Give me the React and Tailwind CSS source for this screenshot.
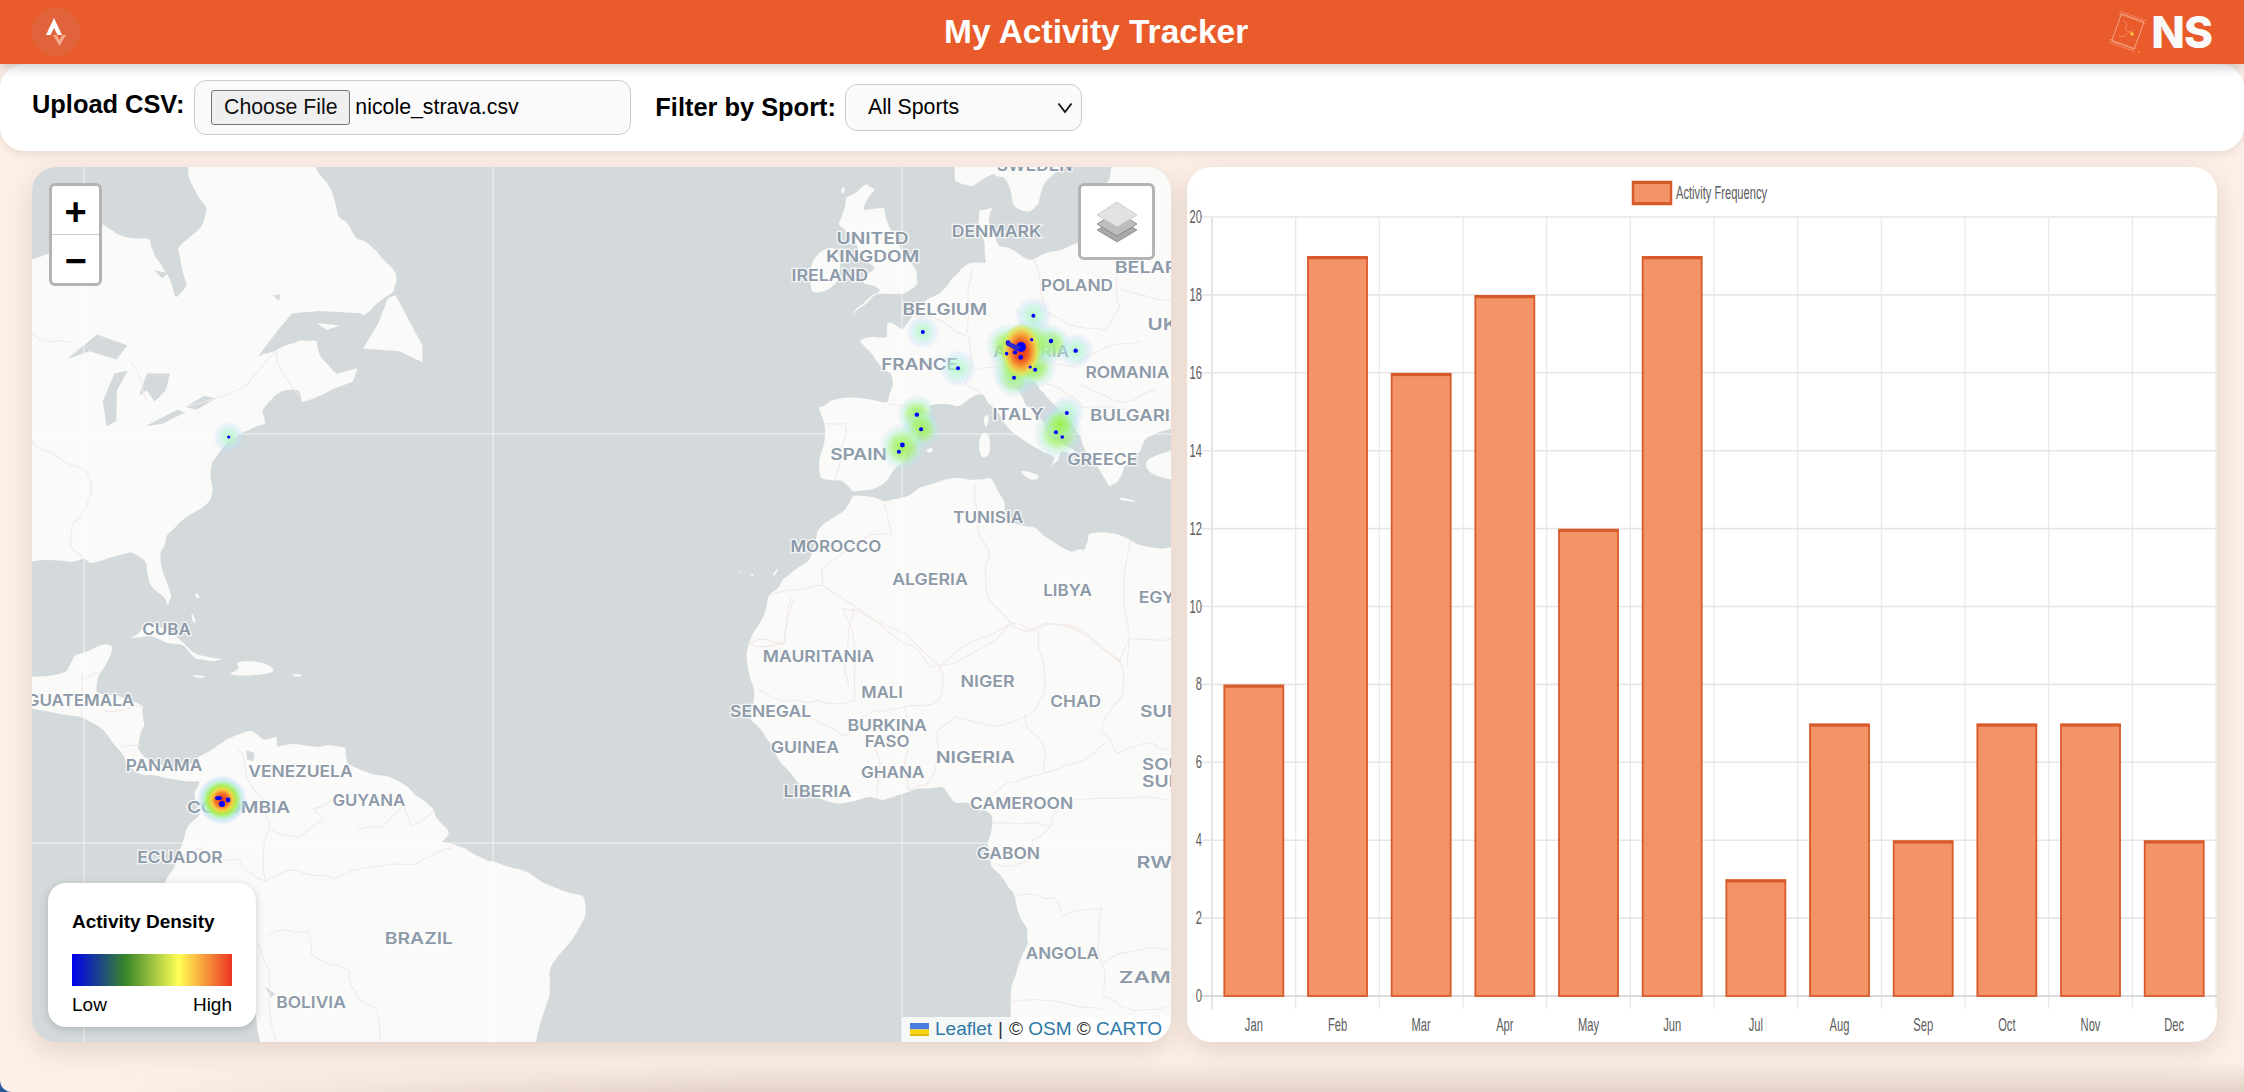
// App.jsx - activity tracker dashboard
import React from "react";

// the map drawing is traced in three different crops, these bring them to map pixels
const a = ([x, y]) => [x / 2.613, y / 1.792];
const b = ([x, y]) => [588 + x / 2.84, y / 3];
const c = ([x, y]) => [528 + x / 2.529, 433 + y / 3];
const line = (pts, f, close) =>
  "M" + pts.map((p) => f(p).map((n) => n.toFixed(1)).join(" ")).join("L") + (close ? "Z" : "");

// roughens a traced outline a little so coasts don't look like plain polygons
const wiggle = (pts) => {
  let out = pts;
  for (let round = 0; round < 2; round++) {
    const next = [];
    out.forEach((p, i) => {
      const q = out[(i + 1) % out.length];
      const dx = q[0] - p[0];
      const dy = q[1] - p[1];
      const n = Math.sin(p[0] * 12.9898 + p[1] * 78.233) * 43758.5453;
      const k = ((n - Math.floor(n)) - 0.5) * 0.22;
      next.push(p, [(p[0] + q[0]) / 2 - dy * k, (p[1] + q[1]) / 2 + dx * k]);
    });
    out = next;
  }
  return out;
};
const coast = (pts, f) => {
  const local = pts.map(f);
  const rough = local.length > 7 ? wiggle(local) : local;
  const mid = (p, q) => `${((p[0] + q[0]) / 2).toFixed(1)} ${((p[1] + q[1]) / 2).toFixed(1)}`;
  const last = rough[rough.length - 1];
  return (
    `M${mid(last, rough[0])}` +
    rough.map((p, i) => `Q${p[0].toFixed(1)} ${p[1].toFixed(1)} ${mid(p, rough[(i + 1) % rough.length])}`).join("") +
    "Z"
  );
};

const landA = [
  [[-60, 170], [180, 100], [240, 125], [310, 130], [320, 160], [345, 185], [375, 235], [405, 210], [380, 145], [440, 110], [455, 70], [410, 20], [420, -40], [720, -40], [760, 20], [800, 90], [850, 130], [900, 150], [950, 190], [945, 225], [880, 260], [860, 268], [750, 262], [680, 265], [640, 300], [600, 335], [645, 325], [700, 310], [745, 312], [760, 345], [800, 372], [850, 362], [835, 385], [790, 395], [705, 420], [698, 400], [660, 400], [600, 440], [610, 460], [550, 475], [515, 490], [490, 510], [470, 530], [470, 590], [420, 620], [350, 660], [335, 690], [365, 770], [355, 787], [310, 750], [300, 710], [260, 690], [155, 710], [135, 700], [60, 705], [-60, 720]],
  [[-60, 900], [90, 905], [110, 875], [190, 855], [210, 860], [180, 905], [170, 945], [290, 965], [295, 1000], [275, 1040], [345, 1075], [420, 1070], [470, 1045], [530, 1020], [575, 1010], [600, 1025], [640, 1020], [640, 1040], [750, 1040], [820, 1040], [825, 1070], [900, 1090], [1000, 1125], [1050, 1150], [1090, 1190], [1070, 1210], [1130, 1220], [1210, 1245], [1300, 1265], [1440, 1305], [1445, 1345], [1350, 1440], [1345, 1500], [1300, 1640], [606, 1640], [585, 1510], [480, 1400], [345, 1285], [375, 1250], [400, 1195], [440, 1160], [425, 1120], [440, 1100], [345, 1095], [300, 1090], [245, 1070], [235, 1050], [200, 1020], [130, 985], [-60, 955]],
  [[255, 845], [300, 820], [350, 830], [420, 870], [500, 880], [430, 882], [390, 855], [300, 840]],
  [[530, 885], [600, 885], [645, 905], [570, 912], [505, 910], [545, 900]],
  [[410, 910], [460, 912], [440, 917]],
  [[675, 908], [712, 910], [690, 915]],
  [[415, 795], [430, 815], [420, 818]],
  [[430, 760], [440, 775], [425, 770]],
];

const waterA = [
  [[90, 345], [170, 300], [250, 320], [220, 345], [150, 330]],
  [[185, 420], [215, 370], [250, 365], [222, 400], [220, 455], [195, 465]],
  [[280, 410], [300, 370], [360, 370], [350, 400], [320, 420], [300, 400]],
  [[295, 465], [380, 435], [400, 440], [340, 460]],
  [[400, 430], [450, 410], [480, 415], [430, 435]],
  [[560, 1045], [582, 1050], [578, 1065], [562, 1062]],
  [[608, 1468], [635, 1482], [625, 1488]],
  [[320, 185], [355, 190], [340, 200]],
  [[630, 230], [650, 228], [645, 240]],
  // gulf of St Lawrence, the smoothing closes it otherwise
  [[590, 340], [640, 295], [680, 262], [750, 258], [860, 262], [900, 300], [880, 345], [830, 352], [800, 368], [765, 345], [745, 310], [700, 308], [645, 322]],
];

// these lie in the gulf, so they go on top of the water
const overGulf = [
  [[930, 235], [950, 230], [1020, 320], [1020, 350], [960, 330], [865, 325], [905, 280]],
  [[700, 402], [790, 372], [850, 360], [838, 385], [790, 397], [705, 422]],
  [[745, 280], [805, 284], [770, 292]],
];

const landB = [
  [[640, 90], [700, 50], [725, 70], [690, 130], [750, 120], [755, 155], [790, 230], [845, 320], [845, 350], [800, 380], [720, 385], [660, 445], [700, 400], [740, 370], [690, 350], [725, 300], [680, 260], [655, 200], [620, 170]],
  [[545, 270], [610, 230], [630, 290], [615, 360], [545, 385], [540, 340]],
  [[680, 520], [760, 510], [760, 465], [800, 490], [830, 450], [900, 385], [960, 320], [990, 290], [1040, 290], [1030, 210], [1020, 130], [1060, 120], [1050, 180], [1080, 240], [1130, 260], [1170, 280], [1280, 235], [1350, 240], [1400, 200], [1300, 100], [1390, 40], [1400, -30], [1640, -30], [1640, 790], [1500, 810], [1480, 850], [1450, 880], [1420, 930], [1390, 960], [1340, 880], [1310, 820], [1290, 780], [1240, 720], [1190, 665], [1170, 640], [1120, 660], [1150, 715], [1205, 765], [1215, 800], [1285, 845], [1295, 862], [1255, 850], [1245, 880], [1215, 905], [1235, 870], [1195, 850], [1120, 800], [1060, 720], [1030, 680], [960, 720], [880, 715], [880, 740], [830, 830], [800, 890], [750, 950], [660, 975], [630, 940], [570, 935], [570, 860], [580, 770], [565, 720], [600, 700], [760, 710], [775, 650], [770, 620], [700, 545]],
  [[940, -30], [950, 40], [1000, 60], [1060, 20], [1090, 30], [1115, 110], [1160, 135], [1190, 110], [1210, 40], [1270, -30]],
  [[1640, 830], [1500, 870], [1490, 900], [1520, 930], [1640, 950]],
  [[1125, 905], [1200, 925], [1170, 945]],
  [[1020, 800], [1050, 795], [1052, 870], [1020, 872]],
  [[1030, 750], [1050, 740], [1040, 790]],
  [[865, 850], [890, 840], [885, 860]],
  [[1415, 990], [1480, 1005], [1420, 1000]],
  [[625, 70], [640, 55], [635, 85]],
  [[338, 1210], [345, 1215], [340, 1218]],
  [[370, 1222], [382, 1220], [375, 1230]],
  [[432, 1225], [452, 1198], [440, 1228]],
];

const africa = [
  ...[[640, 1030], [560, 1090], [540, 1180], [460, 1240], [420, 1290], [365, 1430], [380, 1560]].map(b),
  ...[[480, 360], [540, 440], [590, 530], [690, 610], [780, 590], [820, 600], [900, 565], [970, 560], [1000, 610], [1090, 640], [1080, 730], [1090, 800], [1150, 880], [1170, 965], [1185, 1030], [1140, 1160], [1135, 1400]].map(c),
  [1180, 920],
  ...[[1680, 1150], [1568, 1140], [1450, 1120], [1400, 1100], [1330, 1100], [1320, 1150], [1280, 1155], [1180, 1080], [1090, 1060], [1090, 1000], [1050, 930], [1000, 940], [850, 960], [750, 1005], [660, 985]].map(b),
];

const bordersA = [
  [[0, 300], [100, 315]],
  [[260, 350], [300, 420]],
  [[400, 430], [555, 395], [640, 330], [665, 380], [700, 410]],
  [[0, 490], [60, 515], [130, 540], [155, 565], [105, 640], [100, 680], [135, 700]],
  [[130, 905], [130, 985]],
  [[130, 920], [180, 905]],
  [[190, 975], [290, 965]],
  [[230, 1040], [285, 1035]],
  [[535, 1040], [560, 1090], [610, 1140], [620, 1185], [700, 1200], [760, 1170], [735, 1150], [790, 1130]],
  [[850, 1190], [910, 1185], [970, 1140], [990, 1180], [1050, 1150]],
  [[620, 1185], [610, 1280]],
  [[370, 1250], [440, 1220], [540, 1240], [610, 1280], [690, 1260], [790, 1275], [1000, 1250], [1100, 1220]],
  [[610, 1380], [720, 1370], [730, 1410], [830, 1440], [850, 1490], [900, 1510], [910, 1568]],
  [[640, 1568], [620, 1440], [590, 1390]],
];

const bordersB = [
  [[760, 710], [880, 745]],
  [[580, 770], [640, 770], [625, 850], [610, 935]],
  [[830, 450], [990, 510], [1000, 590], [980, 650], [1030, 680]],
  [[985, 500], [990, 350], [1000, 300]],
  [[1175, 280], [1195, 380], [1210, 430]],
  [[1120, 430], [1195, 430], [1270, 470], [1380, 490], [1420, 420], [1410, 350], [1420, 300]],
  [[1010, 610], [1110, 600], [1200, 590], [1290, 600], [1380, 540], [1480, 520]],
  [[1210, 650], [1290, 690], [1310, 720], [1330, 720], [1560, 760]],
  [[1300, 650], [1400, 700], [1520, 670]],
  [[1420, 365], [1568, 400]],
  [[420, 1290], [500, 1270], [575, 1255], [575, 1205], [700, 1110], [770, 1100], [750, 1010]],
  [[575, 1255], [880, 1470], [910, 1500], [1110, 1370], [1170, 1390], [1215, 1370], [1420, 1480], [1450, 1415], [1568, 1415]],
  [[365, 1430], [465, 1430], [490, 1290]],
  [[635, 1325], [665, 1325], [650, 1560]],
  [[1010, 950], [1015, 1060], [1050, 1160], [1050, 1300], [1110, 1370]],
  [[1450, 1120], [1440, 1500]],
];

const bordersC = [
  [[480, 130], [570, 130], [590, 0]],
  [[715, 25], [745, 300], [650, 300], [590, 300], [500, 270]],
  [[715, 25], [870, 130], [940, 200], [1140, 70], [1190, 95], [1235, 70], [1415, 185], [1420, 290], [1380, 350], [1370, 400], [1410, 460], [1500, 430], [1545, 450]],
  [[960, 200], [960, 300], [870, 320], [880, 380]],
  [[950, 400], [1000, 350], [1100, 380], [1175, 350], [1220, 430], [1225, 520], [1130, 550], [1060, 640]],
  [[1175, 350], [1225, 280], [1210, 95]],
  [[1225, 520], [1300, 490], [1380, 430]],
  [[870, 320], [800, 330], [720, 410], [600, 350]],
  [[800, 450], [800, 590]],
  [[880, 450], [880, 570], [930, 550], [950, 400]],
  [[1090, 670], [1240, 680], [1250, 640], [1300, 600], [1540, 600]],
  [[1100, 790], [1190, 780], [1195, 720], [1240, 680]],
  [[1150, 890], [1250, 895], [1270, 950], [1370, 925], [1370, 1090], [1545, 1050]],
  [[1370, 1090], [1370, 1190], [1420, 1220], [1545, 1215]],
  [[1140, 1205], [1370, 1225]],
];

// [text, left, right, middle], traced per crop
const labelsA = [
  ["CUBA", 288, 415, 828], ["GUATEMALA", -14, 267, 956], ["PANAMA", 245, 445, 1072],
  ["VENEZUELA", 565, 838, 1082], ["GUYANA", 785, 975, 1135], ["COLOMBIA", 405, 675, 1147],
  ["ECUADOR", 275, 498, 1236], ["BRAZIL", 922, 1100, 1381], ["BOLIVIA", 638, 820, 1496],
];
const labelsB = [
  ["SWEDEN", 1070, 1285, -5], ["UNITED", 615, 820, 212], ["KINGDOM", 585, 850, 267], ["IRELAND", 487, 705, 323],
  ["DENMARK", 942, 1197, 191], ["BELARUS", 1405, 1660, 300], ["POLAND", 1195, 1400, 355],
  ["BELGIUM", 802, 1043, 425], ["UKRAINE", 1498, 1760, 470], ["FRANCE", 742, 960, 592],
  ["AUSTRIA", 1060, 1275, 552], ["ROMANIA", 1322, 1560, 616], ["ITALY", 1058, 1203, 740],
  ["BULGARIA", 1335, 1600, 745], ["SPAIN", 597, 758, 862], ["GREECE", 1270, 1470, 875],
  ["TUNISIA", 946, 1145, 1049], ["MOROCCO", 484, 742, 1136], ["ALGERIA", 773, 988, 1236],
  ["LIBYA", 1202, 1340, 1269], ["EGYPT", 1473, 1640, 1290],
];
const labelsC = [
  ["MAURITANIA", 513, 795, 167], ["MALI", 762, 867, 277], ["NIGER", 1013, 1150, 242], ["CHAD", 1240, 1368, 302],
  ["SUDAN", 1467, 1640, 332], ["SENEGAL", 430, 635, 334], ["BURKINA", 727, 928, 376], ["FASO", 771, 884, 424],
  ["GUINEA", 533, 706, 440], ["NIGERIA", 950, 1150, 471], ["GHANA", 761, 922, 515], ["SOUTH", 1472, 1640, 493],
  ["SUDAN", 1472, 1645, 542], ["LIBERIA", 565, 737, 574], ["CAMEROON", 1037, 1298, 608], ["GABON", 1054, 1214, 758],
  ["RWANDA", 1458, 1700, 785], ["ANGOLA", 1178, 1363, 1060], ["ZAMBIA", 1413, 1640, 1132],
];

const seams = { x: [52, 461, 870], y: [267, 676] };

// heat spots in the europe crop: [x, y, radius, gradient]
const halos = [
  [860, 495, 17, "low"], [960, 604, 19, "low"], [1174, 446, 19, "low"], [1295, 551, 18, "low"],
  [1269, 738, 18, "low"], [843, 743, 20, "mid"], [855, 787, 20, "mid"], [802, 840, 24, "mid"],
  [1245, 800, 25, "mid"], [1250, 770, 18, "mid"], [1119, 632, 20, "mid"], [1130, 590, 28, "mid"],
  [1100, 535, 22, "mid"], [1179, 600, 22, "mid"], [1224, 530, 20, "mid"], [1170, 530, 26, "mid"],
];
const dots = [
  [1102, 527, 2.4], [1122, 556, 2.2], [1098, 560, 1.8], [1138, 571, 2.4], [1169, 518, 1.6], [1224, 522, 2.2],
  [1294, 551, 2.2], [1165, 600, 1.6], [1179, 608, 2], [1119, 632, 2], [1174, 446, 2], [860, 495, 2], [960, 604, 2],
  [843, 743, 2.2], [855, 787, 2], [802, 834, 2.4], [792, 854, 2], [1269, 738, 2], [1238, 796, 2], [1256, 810, 1.8],
];

const LandMap = () => (
  <svg viewBox="0 0 1139 875" className="block h-full w-full">
    <defs>
      <radialGradient id="low">
        <stop offset="0%" stopColor="#b4f5b4" stopOpacity="0.85" />
        <stop offset="45%" stopColor="#b6f5dc" stopOpacity="0.6" />
        <stop offset="75%" stopColor="#bcdcfa" stopOpacity="0.3" />
        <stop offset="100%" stopColor="#c4d0ff" stopOpacity="0" />
      </radialGradient>
      <radialGradient id="mid">
        <stop offset="0%" stopColor="#9af04c" stopOpacity="0.95" />
        <stop offset="45%" stopColor="#a8f27c" stopOpacity="0.72" />
        <stop offset="72%" stopColor="#b4f0d8" stopOpacity="0.42" />
        <stop offset="100%" stopColor="#c0d0ff" stopOpacity="0" />
      </radialGradient>
      <radialGradient id="high">
        <stop offset="0%" stopColor="#e8301c" />
        <stop offset="35%" stopColor="#ee5a20" />
        <stop offset="60%" stopColor="#f5a83a" />
        <stop offset="82%" stopColor="#e6e65a" stopOpacity="0.85" />
        <stop offset="100%" stopColor="#a8ec60" stopOpacity="0" />
      </radialGradient>
      <radialGradient id="city">
        <stop offset="0%" stopColor="#e8301c" />
        <stop offset="26%" stopColor="#f0702a" />
        <stop offset="42%" stopColor="#f6d040" />
        <stop offset="58%" stopColor="#a8ee5a" />
        <stop offset="74%" stopColor="#b0f0c8" stopOpacity="0.8" />
        <stop offset="88%" stopColor="#b4d8f8" stopOpacity="0.4" />
        <stop offset="100%" stopColor="#c0d0ff" stopOpacity="0" />
      </radialGradient>
    </defs>

    <rect width="1139" height="875" fill="#d4dadc" />
    <g fill="#fafaf8">
      {landA.map((p, i) => <path key={i} d={coast(p, a)} />)}
      {landB.map((p, i) => <path key={i} d={coast(p, b)} />)}
      <path d={coast(africa, (p) => p)} />
    </g>
    <g fill="#d4dadc">
      {waterA.map((p, i) => <path key={i} d={line(p, a, true)} />)}
    </g>
    <g fill="#fafaf8">
      {overGulf.map((p, i) => <path key={i} d={line(p, a, true)} />)}
    </g>
    <g fill="none" stroke="#f2e9e9" strokeWidth="1.1">
      {bordersA.map((p, i) => <path key={i} d={line(wiggle(p.map(a)).slice(0, -3), (q) => q)} />)}
      {bordersB.map((p, i) => <path key={i} d={line(wiggle(p.map(b)).slice(0, -3), (q) => q)} />)}
      {bordersC.map((p, i) => <path key={i} d={line(wiggle(p.map(c)).slice(0, -3), (q) => q)} />)}
    </g>
    <g stroke="#ffffff" strokeOpacity="0.7" strokeWidth="1">
      {seams.x.map((x) => <line key={x} x1={x} x2={x} y1="0" y2="875" />)}
      {seams.y.map((y) => <line key={y} x1="0" x2="1139" y1={y} y2={y} />)}
    </g>

    <g fontFamily="Inter, sans-serif" fontWeight="600" fontSize="16" fill="#8d9aa8" stroke="#ffffff" strokeOpacity="0.75" strokeWidth="2.5" style={{ paintOrder: "stroke" }}>
      {[[labelsA, a], [labelsB, b], [labelsC, c]].map(([list, f]) =>
        list.map(([t, l, r, m]) => {
          const [x1, y] = f([l, m]);
          const [x2] = f([r, m]);
          return (
            <text key={t + l} x={x1} y={y + 6} textLength={x2 - x1} lengthAdjust="spacingAndGlyphs">
              {t}
            </text>
          );
        })
      )}
    </g>

    {/* heat layer */}
    {(() => {
      const [ux, uy] = a([514, 484]);
      return <circle cx={ux} cy={uy} r="16" fill="url(#low)" />;
    })()}
    {halos.map(([x, y, r, g], i) => {
      const [cx, cy] = b([x, y]);
      return <circle key={i} cx={cx} cy={cy} r={r} fill={`url(#${g})`} />;
    })}
    <ellipse cx="989" cy="184" rx="20" ry="28" fill="url(#high)" />
    <circle cx="190" cy="633" r="25" fill="url(#city)" />
    <g fill="#0000ff">
      {dots.map(([x, y, r], i) => {
        const [cx, cy] = b([x, y]);
        return <circle key={i} cx={cx} cy={cy} r={r} />;
      })}
      <circle cx="989" cy="180" r="5" />
      <path d="M975 174 L989 180 L985 184 L974 178Z" fill="#2b2bd0" />
      <circle cx="196.7" cy="270" r="1.6" />
      <ellipse cx="186.5" cy="631" rx="3.5" ry="2" />
      <circle cx="190" cy="637" r="3" />
      <circle cx="196" cy="633" r="2.4" />
    </g>
  </svg>
);

const months = ["Jan", "Feb", "Mar", "Apr", "May", "Jun", "Jul", "Aug", "Sep", "Oct", "Nov", "Dec"];
const counts = [8, 19, 16, 18, 12, 19, 3, 7, 4, 7, 7, 4];
const X0 = 25;
const STEP = 83.67;
const Y0 = 829;
const UNIT = 38.95;

// chart text looks squeezed in the picture, so it is narrowed with scale
const ChartText = ({ x, y, anchor = "middle", children }) => (
  <text transform={`translate(${x} ${y}) scale(0.62 1)`} textAnchor={anchor} fontSize="18" fill="#5c5c5c" fontFamily="Liberation Sans, sans-serif">
    {children}
  </text>
);

const BarChart = () => (
  <svg viewBox="0 0 1030 875" className="block h-full w-full">
    <rect x="446" y="15" width="38" height="22" fill="#f29468" stroke="#d85a2a" strokeWidth="2.5" />
    <rect x="445" y="14" width="40" height="3" fill="#d85a2a" />
    <rect x="445" y="35" width="40" height="3" fill="#d85a2a" />
    <ChartText x="489" y="32" anchor="start">Activity Frequency</ChartText>

    {Array.from({ length: 13 }, (_, i) => (
      <line key={i} x1={X0 + i * STEP} x2={X0 + i * STEP} y1="50" y2="842" stroke={i === 0 ? "#d4d4d4" : "#e8e8e8"} strokeWidth="1.2" />
    ))}
    {Array.from({ length: 11 }, (_, i) => {
      const y = Y0 - i * 2 * UNIT;
      return (
        <g key={i}>
          <line x1="14" x2="1030" y1={y} y2={y} stroke={i === 0 ? "#d0d0d0" : "#e6e6e6"} strokeWidth="1.6" />
          <ChartText x="15" y={y + 6} anchor="end">{i * 2}</ChartText>
        </g>
      );
    })}

    {counts.map((n, i) => {
      const cx = X0 + (i + 0.5) * STEP;
      const top = Y0 - n * UNIT + 1;
      return (
        <g key={months[i]}>
          <rect x={cx - 29.5} y={top} width="59" height={Y0 - top} fill="#f29468" stroke="#d85a2a" strokeWidth="1.8" />
          <rect x={cx - 30} y={top - 0.5} width="60" height="2.8" fill="#d85a2a" />
          <ChartText x={cx} y="864">{months[i]}</ChartText>
        </g>
      );
    })}
  </svg>
);

const StravaLogo = () => (
  <div className="flex h-12 w-12 items-center justify-center rounded-full bg-[#e0633c]">
    <svg viewBox="0 0 48 48" className="h-12 w-12">
      <path d="M14 27 L22 10 L30 27 L25.500 27 L22 20 L18.500 27Z" fill="#ffffff" />
      <path d="M21 27 L24.500 27 L27.500 32 L30.500 27 L34 27 L27.500 38Z" fill="#f5ab8c" />
    </svg>
  </div>
);

const NsLogo = () => (
  <div className="flex items-center gap-[4px]">
    <svg viewBox="0 0 38 42" className="h-[42px] w-[38px]" fill="none">
      <g transform="rotate(20 19 20)" opacity="0.75">
        <rect x="7" y="6" width="24" height="29" stroke="#f8d8c8" strokeWidth="0.7" />
        <path d="M5 4 H33 M5 7 H33 M5 34 H33 M5 37 H33" stroke="#f8d8c8" strokeWidth="0.7" strokeDasharray="1.500 1" />
        <path d="M11 12 Q17 12 16 18 T25 17 M12 28 Q18 28 19 23 T26 22" stroke="#f3a27e" strokeWidth="0.7" />
      </g>
      <circle cx="23" cy="23" r="1.800" fill="#f9c83a" />
      <circle cx="30" cy="41" r="0.700" fill="#f9c83a" />
    </svg>
    <span className="font-['Inter',sans-serif] text-[44px] leading-none font-extrabold tracking-[-1px] text-[#fafafa]">NS</span>
  </div>
);

const LayersIcon = () => (
  <svg viewBox="0 0 42 42" className="h-[42px] w-[42px]">
    <path d="M21 15 L41 27 L21 39 L1 27Z" fill="#a8a8a8" stroke="#8a8a8a" strokeWidth="0.8" transform="translate(0 2)" />
    <path d="M21 9 L41 21 L21 33 L1 21Z" fill="#bdbdbd" stroke="#7d7d7d" strokeWidth="0.8" transform="translate(0 2)" />
    <path d="M21 0 L41 13 L21 25 L1 13Z" fill="#e2e2e2" stroke="#c4c4c4" strokeWidth="0.8" transform="translate(0 1)" />
  </svg>
);

const App = () => {
  return (
    <div className="h-screen w-full overflow-hidden bg-[#2a5a9a]">
      <div className="flex h-full flex-col overflow-hidden rounded-bl-[12px] bg-[#fdf0e8] font-['Liberation_Sans',Arial,sans-serif] text-black">
        {/* Header */}
        <header className="relative z-10 flex h-[64px] shrink-0 items-center justify-between bg-[#e95b2a] pr-[32px] pl-[32px] shadow-[0_4px_10px_rgba(0,0,0,0.18)]">
          <StravaLogo />
          <h1 className="ml-[3px] text-[33.5px] font-bold text-white">My Activity Tracker</h1>
          <NsLogo />
        </header>

        {/* Controls */}
        <div className="flex h-[87px] shrink-0 items-center rounded-3xl bg-white pl-[32px] shadow-[0_3px_8px_rgba(120,90,70,0.15)]">
          <label className="-mt-[6px] text-[25.4px] font-bold">Upload CSV:</label>
          <div className="ml-[10px] flex h-[55px] w-[437px] items-center rounded-xl border-[1.5px] border-[#cccccc] bg-[#fafafa] pl-[16px]">
            <button className="h-[35px] w-[139px] rounded-[3px] border border-[#767676] bg-[#efefef] text-[21.3px] text-[#111111]">
              Choose File
            </button>
            <span className="ml-[5px] text-[21.3px]">nicole_strava.csv</span>
          </div>
          <label className="ml-[24px] text-[25.4px] font-bold">Filter by Sport:</label>
          <div className="relative ml-[9px] h-[47px] w-[237px]">
            <select className="h-full w-full appearance-none rounded-xl border-[1.5px] border-[#cccccc] bg-[#fafafa] pl-[22px] text-[21.3px] text-black">
              <option>All Sports</option>
            </select>
            <svg viewBox="0 0 16 12" className="pointer-events-none absolute top-[18px] right-[9px] h-[12px] w-[16px]" fill="none" stroke="#111111" strokeWidth="1.800">
              <path d="M1.500 1.500 L8 10 L14.500 1.500" />
            </svg>
          </div>
        </div>

        {/* Map and chart */}
        <main className="flex shrink-0 gap-4 pt-4 pr-[27px] pl-8">
          <div className="relative h-[875px] w-[1139px] overflow-hidden rounded-3xl shadow-[0_8px_28px_rgba(120,90,70,0.2)]">
            <LandMap />

            <div className="absolute top-4 left-[17px] w-[53px] rounded-md border-[3px] border-[#b4b4b4] bg-white">
              <div className="flex h-[49px] items-center justify-center border-b border-[#cccccc] pt-[4px] text-[38px] leading-none font-bold">+</div>
              <div className="flex h-[48px] items-center justify-center pt-[4px] text-[38px] leading-none font-bold">−</div>
            </div>

            <div className="absolute top-4 right-[16px] flex h-[77px] w-[77px] items-center justify-center rounded-md border-[3px] border-[#b4b4b4] bg-white">
              <LayersIcon />
            </div>

            {/* Legend */}
            <div className="absolute top-[716px] left-4 h-[144px] w-[208px] rounded-[18px] bg-white px-6 pt-[27px] shadow-[0_2px_10px_rgba(0,0,0,0.18)]">
              <div className="text-[19px] leading-[24px] font-bold whitespace-nowrap">Activity Density</div>
              <div className="mt-[20px] h-[32px] w-[160px] bg-[linear-gradient(to_right,#0000ee,#37862a,#ffff55,#ee3322)]" />
              <div className="mt-[7px] flex justify-between text-[19px] leading-[24px]">
                <span>Low</span>
                <span>High</span>
              </div>
            </div>

            {/* Attribution */}
            <div className="absolute right-0 bottom-0 flex h-[25px] w-[269px] items-center bg-white/80 pl-[8px] text-[19px] whitespace-nowrap text-[#333333]">
              <svg viewBox="0 0 19 13" className="mr-[6px] h-[13px] w-[19px]">
                <rect width="19" height="6.500" fill="#4c7be1" />
                <rect y="6.500" width="19" height="4" fill="#ffd500" />
                <rect y="10.500" width="19" height="2.500" fill="#e0bc00" />
              </svg>
              <span className="text-[#2e78a8]">Leaflet</span>
              <span className="mx-[6px]">|</span>
              <span>©&nbsp;</span>
              <span className="text-[#2e78a8]">OSM</span>
              <span>&nbsp;©&nbsp;</span>
              <span className="text-[#2e78a8]">CARTO</span>
            </div>
          </div>

          <div className="h-[875px] flex-1 overflow-hidden rounded-3xl bg-white shadow-[0_8px_28px_rgba(120,90,70,0.2)]">
            <BarChart />
          </div>
        </main>

        <div className="ml-[100px] flex-1 bg-[linear-gradient(to_bottom,transparent_40%,rgba(120,90,70,0.2))] [mask-image:linear-gradient(to_right,transparent,black_30%)]" />
      </div>
    </div>
  );
};

export default App;
